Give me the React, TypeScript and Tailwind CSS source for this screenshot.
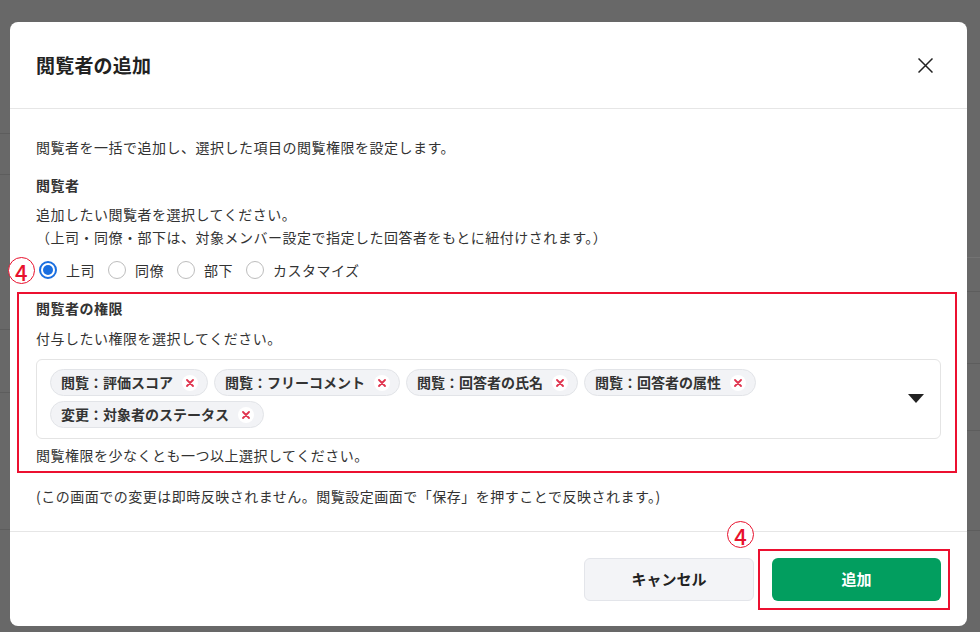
import React from "react";

const font = { fontFamily: '"Noto Sans CJK JP", "Noto Sans", sans-serif' };

const chips = [
  "閲覧：評価スコア",
  "閲覧：フリーコメント",
  "閲覧：回答者の氏名",
  "閲覧：回答者の属性",
  "変更：対象者のステータス",
];

const radios = [
  { label: "上司", checked: true },
  { label: "同僚", checked: false },
  { label: "部下", checked: false },
  { label: "カスタマイズ", checked: false },
];

// red circled number used as a screenshot annotation
const Marker = ({ className }: { className: string }) => (
  <span
    className={`absolute flex h-[27px] w-[27px] items-center justify-center rounded-full border border-[#e8112d] bg-white text-[22px] leading-none font-medium text-[#e8112d] ${className}`}
  >
    4
  </span>
);

const Chip = ({ label }: { label: string }) => (
  <span className="flex h-[27px] items-center gap-[9px] rounded-full border border-[#e2e4e8] bg-[#f2f3f6] pl-[10px] pr-[9px] text-[14px] font-bold text-[#333]">
    {label}
    <span className="flex h-[16px] w-[16px] items-center justify-center rounded-full bg-white">
      <svg width="8" height="8" viewBox="0 0 8 8">
        <path d="M1 1L7 7M7 1L1 7" stroke="#e0344f" strokeWidth="1.8" strokeLinecap="round" />
      </svg>
    </span>
  </span>
);

export default function App() {
  return (
    <div className="relative h-[632px] w-[980px] overflow-hidden bg-[#686868]" style={font}>
      {/* dimmed page behind the dialog */}
      <div className="flex h-full justify-between">
        <div className="flex w-[12px] flex-col pt-[133px]">
          <div className="h-[41px] border-t border-[#5d5d5d]" />
          <div className="h-[155px] border-t border-[#5d5d5d]" />
          <div className="h-[63px] border-t border-[#5d5d5d]" />
          <div className="h-[137px] border-t border-[#5d5d5d]" />
          <div className="border-t border-[#5d5d5d]" />
        </div>
        <div className="flex w-[14px] flex-col pt-[257px]">
          <div className="h-[34px] border-t border-[#737373]" />
          <div className="h-[72px] border-t border-[#5d5d5d]" />
          <div className="h-[67px] border-t border-[#5d5d5d]" />
          <div className="h-[100px] border-t border-[#5d5d5d]" />
          <div className="border-t border-[#5d5d5d]" />
        </div>
      </div>

      {/* dialog */}
      <div className="absolute left-[10px] top-[22px] w-[957px] rounded-[8px] bg-white">
        <div className="flex h-[87px] items-center justify-between border-b border-[#e6e6e6] pl-[26px] pr-[34px]">
          <h1 className="text-[19px] font-bold tracking-[0.2px] text-[#222]">閲覧者の追加</h1>
          <svg width="15" height="15" viewBox="0 0 15 15">
            <path d="M0.5 0.5L14.5 14.5M14.5 0.5L0.5 14.5" stroke="#222" strokeWidth="1.5" />
          </svg>
        </div>

        <div className="px-[26px] pt-[27px] pb-[23px] text-[14px] leading-[23px] tracking-[0.5px] text-[#333]">
          <p>閲覧者を一括で追加し、選択した項目の閲覧権限を設定します。</p>
          <p className="mt-[15px] font-bold">閲覧者</p>
          <p className="mt-[6px]">
            追加したい閲覧者を選択してください。
            <br />
            （上司・同僚・部下は、対象メンバー設定で指定した回答者をもとに紐付けされます。）
          </p>

          <div className="relative mt-[10px] flex h-[22px] items-center gap-[13px] pl-[3px]">
            <Marker className="-left-[28px] -top-[2px]" />
            {radios.map((r) => (
              <label key={r.label} className="flex items-center gap-[9px]">
                {r.checked ? (
                  <span className="flex h-[18px] w-[18px] items-center justify-center rounded-full border-[2px] border-[#1a6fe0]">
                    <span className="h-[10px] w-[10px] rounded-full bg-[#1a6fe0]" />
                  </span>
                ) : (
                  <span className="h-[18px] w-[18px] rounded-full border-[1.5px] border-[#bdbdbd]" />
                )}
                <span className="text-[14px]">{r.label}</span>
              </label>
            ))}
          </div>

          <div className="mt-[11px] -ml-[19px] -mr-[16px] border-2 border-[#ec1030] pt-[3px] pr-[14px] pb-[4px] pl-[17px]">
            <p className="font-bold">閲覧者の権限</p>
            <p className="mt-[7px]">付与したい権限を選択してください。</p>
            <div className="mt-[9px] flex h-[80px] items-start rounded-[6px] border border-[#e4e4e4] pt-[9px] pl-[13px] pr-[16px] tracking-normal">
              <div className="flex flex-1 flex-wrap gap-x-[6px] gap-y-[5px]">
                {chips.map((c) => (
                  <Chip key={c} label={c} />
                ))}
              </div>
              <svg className="mt-[25px]" width="16" height="9" viewBox="0 0 16 9">
                <path d="M0 0H16L8 9Z" fill="#222" />
              </svg>
            </div>
            <p className="mt-[5px]">閲覧権限を少なくとも一つ以上選択してください。</p>
          </div>

          <p className="mt-[12px]">(この画面での変更は即時反映されません。閲覧設定画面で「保存」を押すことで反映されます。)</p>
        </div>

        <div className="flex justify-end gap-[18px] border-t border-[#e6e6e6] px-[26px] pt-[26px] pb-[25px]">
          <button className="h-[43px] w-[170px] rounded-[6px] border border-[#e3e5ea] bg-[#f3f4f7] text-[15px] font-bold text-[#222]">
            キャンセル
          </button>
          <div className="relative">
            <Marker className="-left-[45px] -top-[37px]" />
            <span className="absolute -left-[14px] -right-[9px] -top-[9px] -bottom-[9px] border-2 border-[#ec1030]" />
            <button className="relative h-[43px] w-[169px] rounded-[6px] bg-[#029e5f] text-[15px] font-bold text-white">
              追加
            </button>
          </div>
        </div>
      </div>
    </div>
  );
}
